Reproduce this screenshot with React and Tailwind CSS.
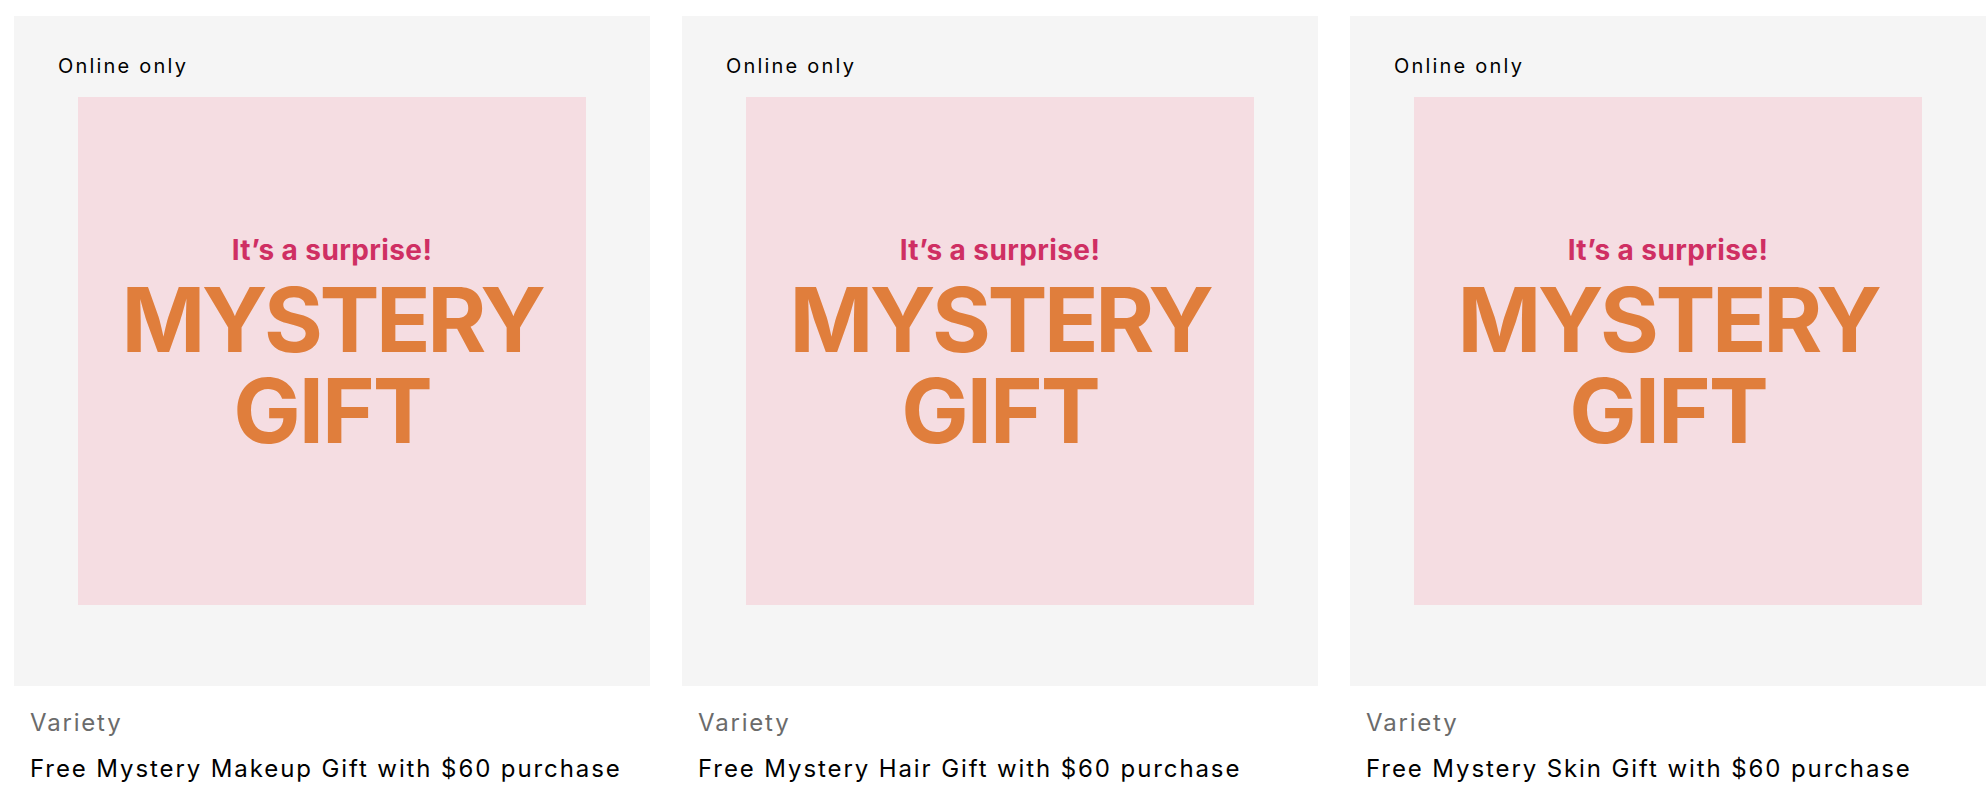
const products = [
  { id: 1, name: "Free Mystery Makeup Gift with $60 purchase" },
  { id: 2, name: "Free Mystery Hair Gift with $60 purchase" },
  { id: 3, name: "Free Mystery Skin Gift with $60 purchase" },
];

function MysteryArt() {
  return (
    <div className="w-[508px] h-[508px] bg-[#f5dde2] flex flex-col items-center pt-[140px] font-['Inter',sans-serif]">
      <div className="text-[28px] leading-[26px] font-bold text-[#cf2f63] tracking-[0.4px]">
        It’s a surprise!
      </div>
      <div className="mt-[11px] text-[90px] leading-[91px] font-bold text-[#e07e3c] text-center tracking-[-3.5px]">
        MYSTERY
        <br />
        <span className="tracking-[-2px]">GIFT</span>
      </div>
    </div>
  );
}

function ProductCard({ product }) {
  return (
    <div className="w-[636px] shrink-0">
      <div className="relative h-[670px] bg-[#f5f5f5] flex items-center justify-center">
        <span className="absolute left-[44px] top-[36px] text-[20px] leading-[28px] text-black tracking-[2.2px]">
          Online only
        </span>
        <MysteryArt />
      </div>
      <div className="px-4 mt-[21px]">
        <div className="text-[24px] leading-[32px] text-[#6b6b6b] tracking-[1.8px]">Variety</div>
        <div className="mt-[14px] text-[24px] leading-[32px] text-black tracking-[1.9px]">{product.name}</div>
      </div>
    </div>
  );
}

export default function App() {
  return (
    <div className="w-[1986px] h-[804px] overflow-hidden bg-white pt-4 pl-[14px] flex gap-8 font-['Inter',sans-serif]">
      {products.map((p) => (
        <ProductCard key={p.id} product={p} />
      ))}
    </div>
  );
}
